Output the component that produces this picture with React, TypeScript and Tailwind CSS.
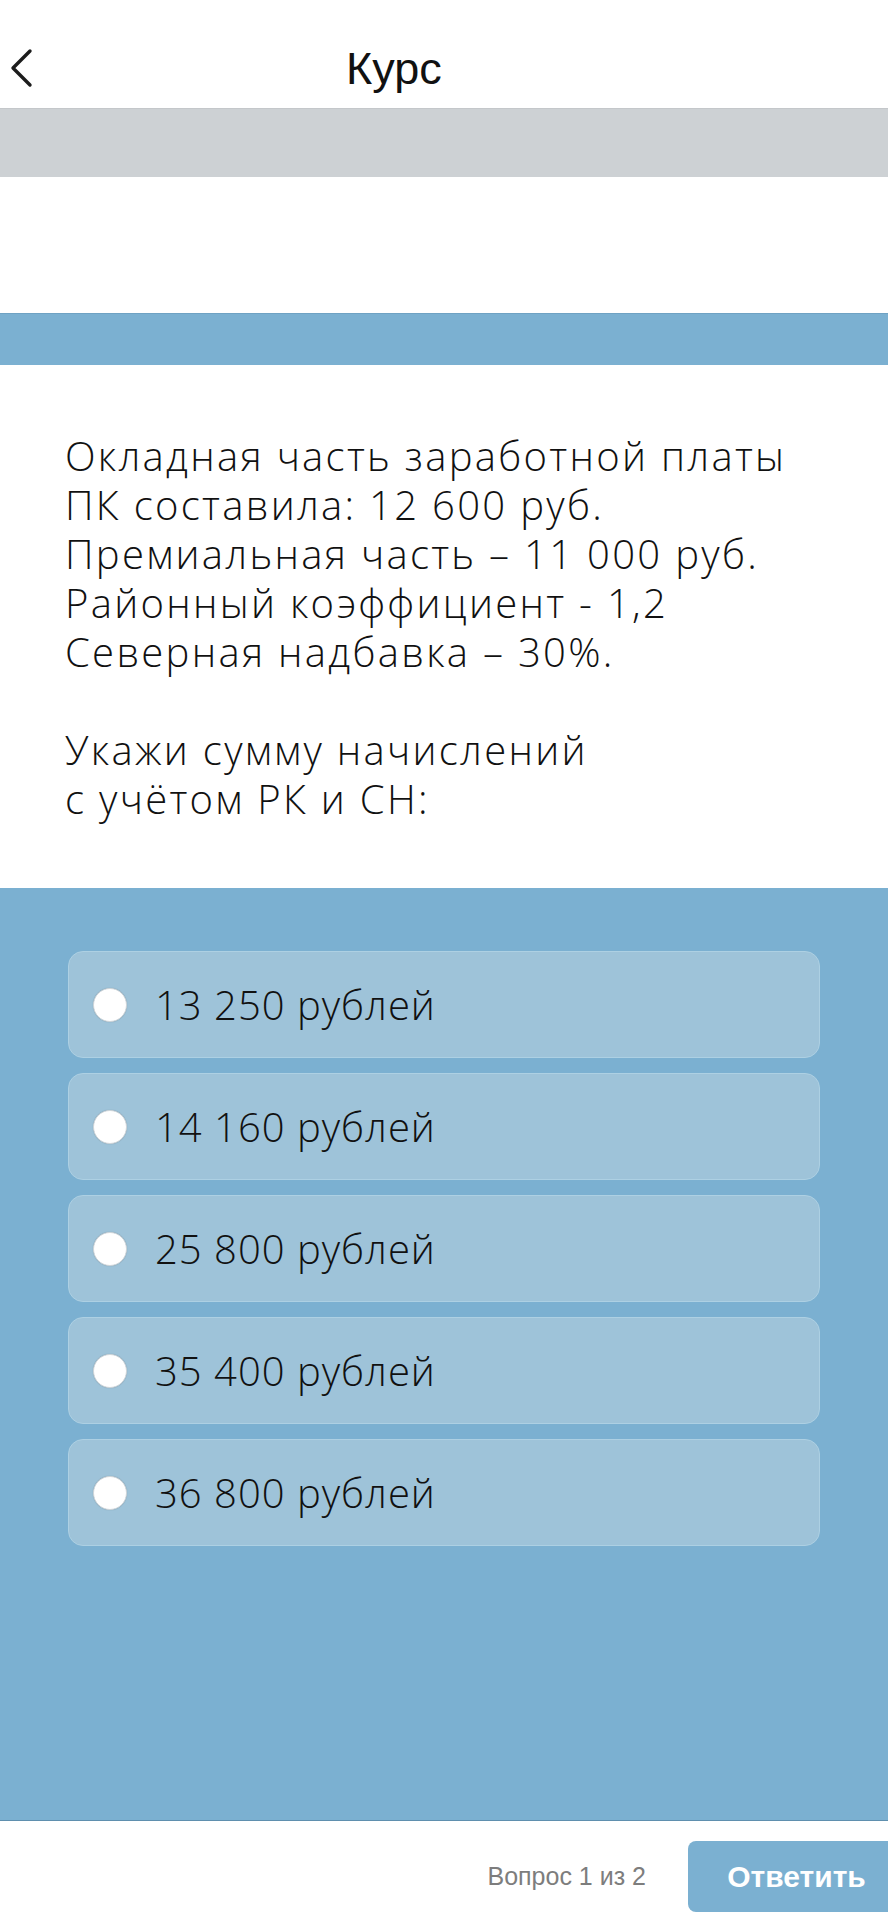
import React from "react";

const options = ["13 250 рублей", "14 160 рублей", "25 800 рублей", "35 400 рублей", "36 800 рублей"];

export default function App() {
  return (
    <div className="w-[888px] h-[1920px] flex flex-col bg-white overflow-hidden">
      {/* Top bar */}
      <div className="h-[108px] shrink-0 flex items-center pt-[28px] relative">
        <button className="ml-[9px] w-[24px] h-[40px] flex items-center justify-center">
          <svg width="24" height="40" viewBox="0 0 24 40" fill="none">
            <path d="M21 3 L4 20 L21 37" stroke="#1c1c1c" strokeWidth="3.4" strokeLinecap="round" strokeLinejoin="round" />
          </svg>
        </button>
        <h1 className="ml-[313px] text-[45px] leading-none text-[#111] font-['Liberation_Sans',Arial,sans-serif]">Курс</h1>
      </div>

      {/* Progress / image placeholder bands */}
      <div className="h-[69px] shrink-0 bg-[#cdd1d4] border-t border-[#c4c7ca]" />
      <div className="h-[136px] shrink-0 bg-white" />
      <div className="h-[52px] shrink-0 bg-[#7bb0d1] border-t border-[#6fa2c3]" />

      {/* Question */}
      <div className="shrink-0 pl-[65px] pr-[20px] pt-[66px] pb-[65px] text-[40px] leading-[49px] tracking-[2.3px] text-[#111] font-light font-['Open_Sans','Noto_Sans',sans-serif]">
        <p>Окладная часть заработной платы</p>
        <p>ПК составила: 12 600 руб.</p>
        <p>Премиальная часть – 11 000 руб.</p>
        <p>Районный коэффициент - 1,2</p>
        <p>Северная надбавка – 30%.</p>
        <p>&nbsp;</p>
        <p>Укажи сумму начислений</p>
        <p>с учётом РК и СН:</p>
      </div>

      {/* Answers */}
      <div className="flex-1 bg-[#7bb0d1] px-[68px] pt-[63px] flex flex-col gap-[15px] border-b border-[#5f8fae]">
        {options.map((o) => (
          <label
            key={o}
            className="h-[107px] shrink-0 rounded-[15px] bg-[#9ec3d9] border border-[#add0e3] flex items-center pl-[24px]"
          >
            <span className="w-[34px] h-[34px] rounded-full bg-white border border-[#cfd6db] shadow-[0_0_1px_rgba(0,0,0,0.25)] shrink-0" />
            <span className="ml-[28px] text-[40px] leading-none tracking-[1px] text-[#111] font-light font-['Open_Sans','Noto_Sans',sans-serif]">{o}</span>
          </label>
        ))}
      </div>

      {/* Footer */}
      <div className="h-[99px] shrink-0 flex items-start justify-end pt-[20px] font-['Liberation_Sans',Arial,sans-serif]">
        <span className="mt-[23px] text-[25px] leading-none text-[#7d7d7d]">Вопрос 1 из 2</span>
        <button className="ml-[42px] -mr-[17px] w-[217px] h-[71px] shrink-0 rounded-[8px] bg-[#7bb0d1] text-white text-[30px] font-bold">
          Ответить
        </button>
      </div>
    </div>
  );
}
